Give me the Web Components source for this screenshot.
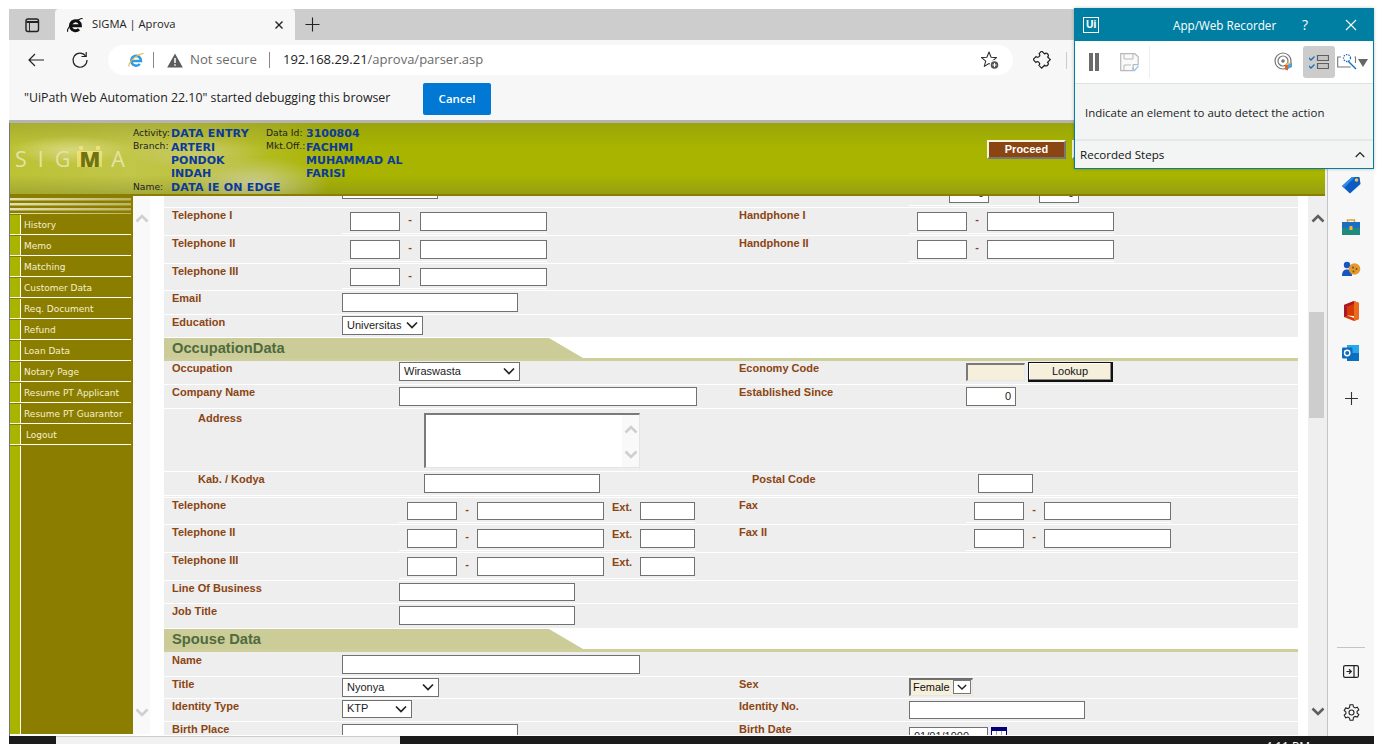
<!DOCTYPE html>
<html>
<head>
<meta charset="utf-8">
<title>SIGMA | Aprova</title>
<style>
  html, body { margin: 0; height: 744px; overflow: hidden; background: #fff; }
  app-shell { font-family: "Liberation Sans", Arial, sans-serif; }
</style>
</head>
<body>
<app-shell>
  <browser-chrome></browser-chrome>
  <div slot="page" style="display:contents">
    <sigma-header></sigma-header>
    <sigma-body>
      <sg-menu slot="menu">
        <sg-menu-item>History</sg-menu-item>
        <sg-menu-item>Memo</sg-menu-item>
        <sg-menu-item>Matching</sg-menu-item>
        <sg-menu-item>Customer Data</sg-menu-item>
        <sg-menu-item>Req. Document</sg-menu-item>
        <sg-menu-item>Refund</sg-menu-item>
        <sg-menu-item>Loan Data</sg-menu-item>
        <sg-menu-item>Notary Page</sg-menu-item>
        <sg-menu-item>Resume PT Applicant</sg-menu-item>
        <sg-menu-item>Resume PT Guarantor</sg-menu-item>
        <sg-menu-item indent>Logout</sg-menu-item>
        <sg-menu-item fill></sg-menu-item>
      </sg-menu>

      <sg-row h="12">
        <sg-field lw="170" ct="-16"><sg-input w="96"></sg-input></sg-field>
        <sg-field lw="170" ct="-12" under>
          <sg-input w="40" v="0" style="margin-left:32px"></sg-input>
          <sg-input w="40" v="0" style="margin-left:50px"></sg-input>
        </sg-field>
      </sg-row>
      <sg-row h="28">
        <sg-field label="Telephone I" lw="170" ct="4" under><sg-input w="50"></sg-input><sg-dash></sg-dash><sg-input w="127"></sg-input></sg-field>
        <sg-field label="Handphone I" lw="170" ct="4" under><sg-input w="50"></sg-input><sg-dash></sg-dash><sg-input w="127"></sg-input></sg-field>
      </sg-row>
      <sg-row h="28">
        <sg-field label="Telephone II" lw="170" ct="4" under><sg-input w="50"></sg-input><sg-dash></sg-dash><sg-input w="127"></sg-input></sg-field>
        <sg-field label="Handphone II" lw="170" ct="4" under><sg-input w="50"></sg-input><sg-dash></sg-dash><sg-input w="127"></sg-input></sg-field>
      </sg-row>
      <sg-row h="27">
        <sg-field label="Telephone III" lw="170" ct="4" under><sg-input w="50" h="18"></sg-input><sg-dash></sg-dash><sg-input w="127" h="18"></sg-input></sg-field>
        <sg-field></sg-field>
      </sg-row>
      <sg-row h="24">
        <sg-field label="Email" lw="170" ct="2"><sg-input w="176"></sg-input></sg-field>
        <sg-field></sg-field>
      </sg-row>
      <sg-row h="22" flat>
        <sg-field label="Education" lw="170" ct="1"><sg-select w="81" v="Universitas"></sg-select></sg-field>
        <sg-field></sg-field>
      </sg-row>

      <sg-section>OccupationData</sg-section>
      <sg-row h="24">
        <sg-field label="Occupation" lw="227" ct="1"><sg-select w="121" v="Wiraswasta"></sg-select></sg-field>
        <sg-field label="Economy Code" lw="227" ct="2"><sg-input w="59" h="18" kind="inset"></sg-input><sg-button>Lookup</sg-button></sg-field>
      </sg-row>
      <sg-row h="24">
        <sg-field label="Company Name" lw="227" ct="2"><sg-input w="298"></sg-input></sg-field>
        <sg-field label="Established Since" lw="227" ct="2"><sg-input w="50" v="0"></sg-input></sg-field>
      </sg-row>
      <sg-row h="63">
        <sg-field label="Address" lw="252" indent="26" lt="2" ct="4"><sg-textarea></sg-textarea></sg-field>
        <sg-field></sg-field>
      </sg-row>
      <sg-row h="26" double>
        <sg-field label="Kab. / Kodya" lw="252" indent="26" ct="2"><sg-input w="176"></sg-input></sg-field>
        <sg-field label="Postal Code" lw="239" indent="13" ct="2"><sg-input w="55"></sg-input></sg-field>
      </sg-row>
      <sg-row h="27">
        <sg-field label="Telephone" lw="227" ct="4" under><sg-input w="50" h="18"></sg-input><sg-dash></sg-dash><sg-input w="127" h="18"></sg-input><sg-ext></sg-ext><sg-input w="55" h="18"></sg-input></sg-field>
        <sg-field label="Fax" lw="227" ct="4" under><sg-input w="50" h="18"></sg-input><sg-dash></sg-dash><sg-input w="127" h="18"></sg-input></sg-field>
      </sg-row>
      <sg-row h="28">
        <sg-field label="Telephone II" lw="227" ct="4" under><sg-input w="50"></sg-input><sg-dash></sg-dash><sg-input w="127"></sg-input><sg-ext></sg-ext><sg-input w="55"></sg-input></sg-field>
        <sg-field label="Fax II" lw="227" ct="4" under><sg-input w="50"></sg-input><sg-dash></sg-dash><sg-input w="127"></sg-input></sg-field>
      </sg-row>
      <sg-row h="28">
        <sg-field label="Telephone III" lw="227" ct="4" under><sg-input w="50"></sg-input><sg-dash></sg-dash><sg-input w="127"></sg-input><sg-ext></sg-ext><sg-input w="55"></sg-input></sg-field>
        <sg-field></sg-field>
      </sg-row>
      <sg-row h="23">
        <sg-field label="Line Of Business" lw="227" ct="2"><sg-input w="176" h="18"></sg-input></sg-field>
        <sg-field></sg-field>
      </sg-row>
      <sg-row h="24" flat>
        <sg-field label="Job Title" lw="227" ct="2"><sg-input w="176"></sg-input></sg-field>
        <sg-field></sg-field>
      </sg-row>

      <sg-section>Spouse Data</sg-section>
      <sg-row h="25">
        <sg-field label="Name" lw="170" lt="1" ct="3"><sg-input w="298"></sg-input></sg-field>
        <sg-field></sg-field>
      </sg-row>
      <sg-row h="22">
        <sg-field label="Title" lw="170" ct="1"><sg-select w="97" v="Nyonya"></sg-select></sg-field>
        <sg-field label="Sex" lw="170" ct="1"><sg-select w="64" h="18" v="Female" kind="inset"></sg-select></sg-field>
      </sg-row>
      <sg-row h="23">
        <sg-field label="Identity Type" lw="170" ct="1"><sg-select w="70" h="18" v="KTP"></sg-select></sg-field>
        <sg-field label="Identity No." lw="170" ct="2"><sg-input w="176" h="18"></sg-input></sg-field>
      </sg-row>
      <sg-row h="13" flat>
        <sg-field label="Birth Place" lw="170" ct="2"><sg-input w="176"></sg-input></sg-field>
        <sg-field label="Birth Date" lw="170" ct="5"><sg-input w="79" v="01/01/1900" align="left"></sg-input><sg-calendar></sg-calendar></sg-field>
      </sg-row>
    </sigma-body>
  </div>
  <edge-sidebar slot="side"></edge-sidebar>
  <recorder-panel slot="over"></recorder-panel>
  <task-bar slot="task"></task-bar>
</app-shell>

<script>
const chevron = (color, up) => `<svg width="14" height="9" viewBox="0 0 14 9" style="display:block"><path d="${up ? 'M1.5 7.5 7 2l5.5 5.5' : 'M1.5 1.5 7 7l5.5-5.5'}" fill="none" stroke="${color}" stroke-width="2.6"/></svg>`;

class AppShell extends HTMLElement {
    constructor() {
        super();
        this.attachShadow({ mode: 'open' });
        this.shadowRoot.innerHTML = `
      <style>
        :host { display: block; position: relative; width: 1382px; height: 744px; overflow: hidden; background: #fff; }
        .frame { display: flex; flex-direction: column; height: 736px; margin: 0 8px 0 9px; padding-top: 9px; box-sizing: border-box; }
        .row { flex: 1; min-height: 0; display: flex; }
        .main { flex: none; width: 1318px; display: flex; flex-direction: column; border-left: 1px solid #777; box-sizing: border-box; background: #f0f0f0; }
      </style>
      <div class="frame">
        <slot></slot>
        <div class="row">
          <div class="main"><slot name="page"></slot></div>
          <slot name="side"></slot>
        </div>
      </div>
      <slot name="task"></slot>
      <slot name="over"></slot>
    `;
    }
}

class BrowserChrome extends HTMLElement {
    constructor() {
        super();
        this.attachShadow({ mode: 'open' });
        this.shadowRoot.innerHTML = `
      <style>
        :host { display: block; font-family: "Open Sans", "Noto Sans", sans-serif; color: #222; }
        .tabs { height: 31px; background: #cdcdcd; display: flex; align-items: flex-end; }
        .tabbtn { width: 46px; height: 31px; display: flex; align-items: center; justify-content: center; }
        .tab { width: 240px; height: 31px; background: #f7f7f7; border-radius: 4px 4px 0 0; display: flex; align-items: center; box-sizing: border-box; padding-left: 12px; }
        .tab .title { margin: -2px 0 0 9px; font-size: 11.2px; line-height: 16px; flex: 1; white-space: nowrap; }
        .tab .x { margin-right: 11px; display: block; }
        .plus { margin-left: 10px; align-self: center; display: block; }
        .tools { height: 40px; background: #f7f7f7; display: flex; align-items: center; }
        .tools > svg { display: block; flex: none; }
        .pill { margin-left: 19px; width: 905px; height: 30px; background: #fff; border-radius: 15px; display: flex; align-items: center; box-sizing: border-box; padding-left: 20px; flex: none; }
        .sep { width: 1px; height: 16px; background: #888; flex: none; }
        .ns { font-size: 13.2px; line-height: 18px; margin-top: -2px; color: #6b6b6b; margin-left: 7px; width: 79px; white-space: nowrap; }
        .url { font-size: 13px; line-height: 18px; margin-top: -2px; color: #6a6a6a; margin-left: 13px; white-space: nowrap; }
        .url b { font-weight: 400; color: #222; }
        .star { margin-left: auto; margin-right: 13px; display: block; }
        .info { height: 37px; background: #f7f7f7; display: flex; align-items: flex-start; padding: 3px 0 0 15px; border-bottom: 3px solid #b4b4b4; box-sizing: content-box; }
        .info span { font-size: 12.36px; line-height: 30px; width: 399px; white-space: nowrap; }
        .info button { width: 68px; height: 32px; background: #0078d4; color: #fff; border: 0; border-radius: 2px; font: 600 11.5px "Open Sans", sans-serif; padding: 0 0 2px; }
      </style>
      <div class="tabs">
        <div class="tabbtn">
          <svg width="16" height="16" viewBox="0 0 16 16"><rect x="2" y="2" width="12.5" height="12.5" rx="2" fill="none" stroke="#222" stroke-width="1.4"/><path d="M2.5 5h11.5" stroke="#222" stroke-width="2"/><path d="M5.5 5v9" stroke="#222" stroke-width=".9"/></svg>
        </div>
        <div class="tab">
          <svg width="16" height="16" viewBox="0 0 16 16"><path d="M3.6 8.8h9.8A5 5 0 1 0 12 12.2" fill="none" stroke="#111" stroke-width="3"/><path d="M.8 14.8C-.5 12 4 7 8 4.5s7-3.6 7.5-2.5" fill="none" stroke="#111" stroke-width="1.1"/></svg>
          <span class="title">SIGMA | Aprova</span>
          <svg class="x" width="10" height="10" viewBox="0 0 10 10"><path d="M1.5 1.5l7 7M8.5 1.5l-7 7" stroke="#222" stroke-width="1.4"/></svg>
        </div>
        <svg class="plus" width="15" height="15" viewBox="0 0 15 15"><path d="M7.5 .5v14M.5 7.5h14" stroke="#222" stroke-width="1.1"/></svg>
      </div>
      <div class="tools">
        <svg width="18" height="14" viewBox="0 0 18 14" style="margin-left:18px"><path d="M17 7H2M8 1 2 7l6 6" fill="none" stroke="#222" stroke-width="1.2"/></svg>
        <svg width="18" height="18" viewBox="0 0 18 18" style="margin-left:26px"><path d="M14.6 5A7 7 0 1 0 16 9" fill="none" stroke="#222" stroke-width="1.2"/><path d="M15.2 1v4.5h-4.7" fill="none" stroke="#222" stroke-width="1.2"/></svg>
        <div class="pill">
          <svg width="16" height="16" viewBox="0 0 16 16" style="flex:none"><path d="M3.6 9h9.4A4.9 4.9 0 1 0 11.8 12" fill="none" stroke="#2e9be6" stroke-width="2.6"/><path d="M1 14.5C0 12 4 7 8 4.5s7-3.6 7.5-2.5" fill="none" stroke="#f2b53a" stroke-width="1.1"/></svg>
          <div class="sep" style="margin-left:9px"></div>
          <svg width="16" height="15" viewBox="0 0 16 15" style="margin-left:13px;flex:none"><path d="M8 .5 15.8 14.5H.2z" fill="#5c5c5c"/><path d="M8 5v5M8 11.2v1.6" stroke="#fff" stroke-width="1.5"/></svg>
          <span class="ns">Not secure</span>
          <div class="sep"></div>
          <span class="url"><b>192.168.29.21</b>/aprova/parser.asp</span>
          <svg class="star" width="20" height="20" viewBox="0 0 20 20"><path d="M9 2 11.1 7.2 16.5 7.6 12.3 11.1 13.7 16.4 9 13.5 4.3 16.4 5.7 11.1 1.5 7.6 6.9 7.2z" fill="none" stroke="#333" stroke-width="1.1" stroke-linejoin="round"/><circle cx="14.5" cy="15" r="5" fill="#fff"/><circle cx="14.5" cy="15" r="3.8" fill="#555"/><path d="M14.5 13v4M12.5 15h4" stroke="#fff" stroke-width="1"/></svg>
        </div>
        <svg width="18" height="18" viewBox="0 0 18 18" style="margin-left:20px"><path d="M6.5 2.5a2.3 2.3 0 0 1 4.6 0H15v4a2.3 2.3 0 0 1 0 4.6V15.5h-4.2a2.3 2.3 0 0 0-4.6 0H2v-4.4a2.3 2.3 0 0 0 0-4.6V2.5z" fill="none" stroke="#222" stroke-width="1.3" transform="rotate(45 9 9) scale(.93) translate(.6 .6)"/></svg>
        <div class="sep" style="height:17px;background:#ccc;margin-left:15px"></div>
      </div>
      <div class="info">
        <span>"UiPath Web Automation 22.10" started debugging this browser</span>
        <button type="button">Cancel</button>
      </div>
    `;
    }
}

class SigmaHeader extends HTMLElement {
    constructor() {
        super();
        this.attachShadow({ mode: 'open' });
        this.shadowRoot.innerHTML = `
      <style>
        :host {
          display: flex; flex: none; height: 73px; margin-right: 2px; box-sizing: border-box;
          border-bottom: 2px solid #8b7d00;
          background:
            radial-gradient(ellipse 75px 26px at 245px 60px, rgba(215,215,205,.62), rgba(215,215,205,0)),
            radial-gradient(ellipse 70px 16px at 190px 30px, rgba(215,215,170,.4), rgba(215,215,170,0)),
            radial-gradient(ellipse 60px 14px at 60px 27px, rgba(225,225,150,.7), rgba(225,225,150,0)),
            linear-gradient(180deg, rgba(130,135,30,.35) 0, rgba(130,135,30,0) 24px, rgba(130,135,30,0) 52px, rgba(120,125,40,.4) 72px),
            linear-gradient(90deg, #bcc234 0, #c2c649 120px, #bcc13c 200px, #a8b400 320px);
        }
        .logo { width: 123px; flex: none; box-sizing: border-box; padding: 24px 0 0 5px; font: 400 21.5px/24px "Open Sans", sans-serif; letter-spacing: 11px; color: #e3e3a6; white-space: nowrap; overflow: hidden; }
        .logo .g { letter-spacing: 7px; }
        .logo b { position: relative; color: #6f7210; font-weight: 800; background: linear-gradient(#efe27a, #dfdb62); letter-spacing: 0; margin-right: 9px; padding: 0 2px; line-height: 16px; display: inline-block; }
        .logo b::before { content: ""; position: absolute; left: 0; right: 0; top: -5px; height: 4px; background: radial-gradient(circle at 4px 2px, #efe27a 2px, transparent 2.5px), radial-gradient(circle at calc(100% - 4px) 2px, #efe27a 2px, transparent 2.5px); }
        .logo .a { letter-spacing: 0; }
        .info { display: grid; grid-template-columns: 38px 95px 40px 105px; grid-template-rows: 14px 13px 13px 13px 14px; padding-top: 4px; position: relative; }
        .k { font: 400 9.2px/12px "DejaVu Sans", sans-serif; color: #222; white-space: nowrap; }
        .k.b { margin-top: -1px; }
        .v { font: 700 11px/13px "DejaVu Sans", sans-serif; color: #0b3a9e; }
        .wide { white-space: nowrap; letter-spacing: .2px; }
        .actions { margin: 17px 0 0 auto; display: flex; gap: 6px; padding-right: 193px; }
        .proceed, .next { height: 19px; box-sizing: border-box; border: 2px solid; border-color: #f5f5e6 #777 #777 #f5f5e6; }
        .proceed { width: 79px; background: #8b4513; color: #fff; font: 700 11px/15px "Liberation Sans", sans-serif; text-align: center; }
        .next { width: 60px; background: #f5efdc; }
      </style>
      <div class="logo">SI<span class="g">G</span><b>M</b><span class="a">A</span></div>
      <div class="info">
        <div class="k">Activity:</div><div class="v wide">DATA ENTRY</div>
        <div class="k">Data Id:</div><div class="v">3100804</div>
        <div class="k b">Branch:</div><div class="v" style="grid-row:span 3">ARTERI<br>PONDOK<br>INDAH</div>
        <div class="k b">Mkt.Off.:</div><div class="v" style="grid-row:span 3">FACHMI<br>MUHAMMAD AL<br>FARISI</div>
        <div class="k" style="grid-row:5;grid-column:1;align-self:end;margin-bottom:1px">Name:</div>
        <div class="v wide" style="grid-row:5;grid-column:2;align-self:end">DATA IE ON EDGE</div>
      </div>
      <div class="actions"><div class="proceed">Proceed</div><div class="next"></div></div>
    `;
    }
}

class SigmaBody extends HTMLElement {
    constructor() {
        super();
        this.attachShadow({ mode: 'open' });
        this.shadowRoot.innerHTML = `
      <style>
        :host { display: flex; flex: 1; min-height: 0; background: #fff; }
        .inner { width: 17px; flex: none; background: #f9f9f9; display: flex; flex-direction: column; justify-content: space-between; align-items: center; padding: 18px 0 17px; box-sizing: border-box; height: 538px; }
        .form { width: 1134px; margin-left: 14px; flex: none; height: 539px; overflow: hidden; background: #fff; }
        .bar { width: 19px; margin-left: 10px; flex: none; background: #efefef; display: flex; flex-direction: column; align-items: center; box-sizing: border-box; padding: 18px 0 0; position: relative; }
        .thumb { width: 15px; height: 106px; background: #cdcdcd; margin: 89px 2px 0 0; }
        .down { margin-top: auto; margin-bottom: 20px; }
      </style>
      <slot name="menu"></slot>
      <div class="inner">${chevron('#cfcfcf', true)}${chevron('#cfcfcf', false)}</div>
      <div class="form"><slot></slot></div>
      <div class="bar">${chevron('#5f5f5f', true)}<div class="thumb"></div><div class="down">${chevron('#5f5f5f', false)}</div></div>
    `;
    }
}

class SgMenu extends HTMLElement {
    constructor() {
        super();
        this.attachShadow({ mode: 'open' });
        this.shadowRoot.innerHTML = `
      <style>
        :host { display: flex; flex-direction: column; width: 123px; flex: none; height: 538px; background: #8b7d00; }
        .strips { height: 18px; flex: none; margin-right: 2px; background: linear-gradient(90deg, rgba(139,125,0,0), rgba(139,125,0,.45)), repeating-linear-gradient(180deg, #8b7d00 0 2px, #e4e2b4 2px 4px, #b5ae50 4px 5px); }
        .list { flex: 1; display: flex; flex-direction: column; margin-right: 2px; }
      </style>
      <div class="strips"></div>
      <div class="list"><slot></slot></div>
    `;
    }
}

class SgMenuItem extends HTMLElement {
    constructor() {
        super();
        this.attachShadow({ mode: 'open' });
        this.shadowRoot.innerHTML = `
      <style>
        :host { display: flex; height: 21px; flex: none; box-sizing: border-box; border-bottom: 1px solid #fff; font: 400 9px/20px "DejaVu Sans", sans-serif; color: #f5f1d0; padding-top: 1px; white-space: nowrap; }
        :host([fill]) { flex: 1; border-bottom: 0; }
        :host([indent]) .t { padding-left: 5px; }
        .s { width: 10px; background: #a8b400; border-right: 1px solid #fff; flex: none; }
        .t { padding-left: 3px; }
      </style>
      <div class="s"></div><div class="t"><slot></slot></div>
    `;
    }
}

class SgRow extends HTMLElement {
    constructor() {
        super();
        this.attachShadow({ mode: 'open' });
        this.shadowRoot.innerHTML = `
      <style>
        :host { display: grid; grid-template-columns: 567px 1fr; box-sizing: border-box; overflow: hidden; background: #eee; border-bottom: 1px solid #fff; }
        :host([flat]) { border-bottom: 0; }
        :host([double]) { border-bottom: 3px double #fff; }
      </style>
      <slot></slot>
    `;
    }
    connectedCallback() {
        this.style.height = this.getAttribute('h') + 'px';
    }
}

class SgField extends HTMLElement {
    constructor() {
        super();
        this.attachShadow({ mode: 'open' });
    }
    connectedCallback() {
        const label = this.getAttribute('label') || '';
        const lw = this.getAttribute('lw') || 170;
        const lt = this.getAttribute('lt') || 0;
        const ct = this.getAttribute('ct') || 0;
        const indent = this.getAttribute('indent') || 0;
        const under = this.hasAttribute('under');
        this.shadowRoot.innerHTML = `
      <style>
        :host { display: flex; padding-left: 8px; min-width: 0; align-items: flex-start; }
        .label { width: ${lw}px; flex: none; box-sizing: border-box; padding: ${lt}px 0 0 ${indent}px; font: 700 11px/14px "Liberation Sans", sans-serif; color: #8b4513; white-space: nowrap; }
        .ctl { display: flex; align-items: flex-start; margin-top: ${ct}px; }
        .ctl.under { padding: 0 0 2px 8px; border-bottom: 1px solid #fff; }
      </style>
      <div class="label">${label}</div>
      <div class="ctl ${under ? 'under' : ''}"><slot></slot></div>
    `;
    }
}

class SgInput extends HTMLElement {
    constructor() {
        super();
        this.attachShadow({ mode: 'open' });
    }
    connectedCallback() {
        const v = this.getAttribute('v') || '';
        const inset = this.getAttribute('kind') === 'inset';
        this.shadowRoot.innerHTML = `
      <style>
        :host { display: block; flex: none; width: ${this.getAttribute('w')}px; height: ${this.getAttribute('h') || 19}px; }
        .box { box-sizing: border-box; width: 100%; height: 100%; background: #fff; border: 1px solid #717171; font: 400 11px/17px "Liberation Sans", sans-serif; color: #222; text-align: ${this.getAttribute('align') || 'right'}; padding: 0 4px; white-space: nowrap; }
        .box.inset { background: #f5efdc; border-width: 2px 1px 1px 2px; border-color: #7a7a7a #e8e8e8 #e8e8e8 #7a7a7a; }
      </style>
      <div class="box ${inset ? 'inset' : ''}">${v}</div>
    `;
    }
}

class SgSelect extends HTMLElement {
    constructor() {
        super();
        this.attachShadow({ mode: 'open' });
    }
    connectedCallback() {
        const inset = this.getAttribute('kind') === 'inset';
        const arrow = '<svg width="12" height="8" viewBox="0 0 12 8"><path d="M1 1.5 6 6.5 11 1.5" fill="none" stroke="#222" stroke-width="1.7"/></svg>';
        this.shadowRoot.innerHTML = `
      <style>
        :host { display: block; flex: none; width: ${this.getAttribute('w')}px; height: ${this.getAttribute('h') || 19}px; }
        .sel { box-sizing: border-box; width: 100%; height: 100%; background: #fff; border: 1px solid #717171; display: flex; align-items: center; justify-content: space-between; padding: 0 4px; font: 400 11px/16px "Liberation Sans", sans-serif; color: #222; }
        .sel span { margin-top: -2px; }
        .sel.inset { background: #f5efdc; border-width: 2px 1px 1px 2px; border-color: #6f6f6f #e6e6e6 #e6e6e6 #6f6f6f; padding: 0 1px 0 2px; color: #111; }
        .sel.inset i { width: 18px; height: 14px; box-sizing: border-box; background: #fff; border: 1px solid #777; display: flex; align-items: center; justify-content: center; }
        .sel.inset i svg { width: 10px; }
        i { display: flex; margin-top: -1px; }
      </style>
      <div class="sel ${inset ? 'inset' : ''}"><span>${this.getAttribute('v')}</span><i>${arrow}</i></div>
    `;
    }
}

class SgDash extends HTMLElement {
    constructor() {
        super();
        this.attachShadow({ mode: 'open' }).innerHTML = `
      <style>:host { display: block; width: 20px; flex: none; text-align: center; font: 700 11px/14px "Liberation Sans", sans-serif; color: #8b4513; }</style>-`;
    }
}

class SgExt extends HTMLElement {
    constructor() {
        super();
        this.attachShadow({ mode: 'open' }).innerHTML = `
      <style>:host { display: block; width: 36px; flex: none; box-sizing: border-box; padding-left: 8px; margin-top: -2px; font: 700 11px/14px "Liberation Sans", sans-serif; color: #8b4513; }</style>Ext.`;
    }
}

class SgButton extends HTMLElement {
    constructor() {
        super();
        this.attachShadow({ mode: 'open' }).innerHTML = `
      <style>
        :host { display: block; flex: none; box-sizing: border-box; width: 85px; height: 20px; margin: -1px 0 0 3px; background: #f5efdc; border: 1px solid #111; border-width: 1px 2px 2px 1px; box-shadow: inset -1px -1px 0 #888, inset 1px 1px 0 #fff; text-align: center; font: 400 11px/17px "Liberation Sans", sans-serif; color: #111; }
      </style><slot></slot>`;
    }
}

class SgTextarea extends HTMLElement {
    constructor() {
        super();
        this.attachShadow({ mode: 'open' }).innerHTML = `
      <style>
        :host { display: block; flex: none; box-sizing: border-box; width: 216px; height: 55px; background: #fff; border: 2px solid #7a7a7a; border-right: 1px solid #e4e4e4; border-bottom: 1px solid #e4e4e4; }
        .wrap { height: 100%; display: flex; justify-content: flex-end; }
        .sb { width: 17px; background: #f9f9f9; display: flex; flex-direction: column; align-items: center; justify-content: space-between; padding: 10px 0 8px; box-sizing: border-box; }
      </style>
      <div class="wrap"><div class="sb">${chevron('#cfcfcf', true)}${chevron('#cfcfcf', false)}</div></div>`;
    }
}

class SgCalendar extends HTMLElement {
    constructor() {
        super();
        this.attachShadow({ mode: 'open' }).innerHTML = `
      <style>:host { display: block; flex: none; margin-left: 3px; margin-top: 0; }</style>
      <svg width="16" height="16" viewBox="0 0 16 16" style="display:block"><rect x=".5" y=".5" width="15" height="15" fill="#fff" stroke="#00007a"/><rect width="16" height="4" fill="#00007a"/><path d="M5.5 4v11M10.5 4v11M1 8.5h14M1 12.5h14" stroke="#aaa"/></svg>`;
    }
}

class SgSection extends HTMLElement {
    constructor() {
        super();
        this.attachShadow({ mode: 'open' });
        this.shadowRoot.innerHTML = `
      <style>
        :host { display: block; height: 24px; box-sizing: border-box; padding-top: 1px; background: #fff; }
        .wrap { height: 23px; position: relative; border-bottom: 3px solid #cfcf9b; box-sizing: border-box; }
        .tab { height: 20px; width: 419px; background: #cccc99; clip-path: polygon(0 0, 385px 0, 419px 100%, 0 100%); box-sizing: border-box; padding-left: 8px; font: 700 14.7px/21px "Liberation Sans", sans-serif; color: #4f6b3d; white-space: nowrap; }
      </style>
      <div class="wrap"><div class="tab"><slot></slot></div></div>
    `;
    }
}

class EdgeSidebar extends HTMLElement {
    constructor() {
        super();
        this.attachShadow({ mode: 'open' });
        this.shadowRoot.innerHTML = `
      <style>
        :host { display: flex; flex-direction: column; align-items: center; width: 47px; flex: none; box-sizing: border-box; border-left: 1px solid #c4c4c4; background: #f7f7f7; padding: 41px 0 3px; }
        .i { height: 42px; flex: none; display: flex; align-items: center; justify-content: center; }
        svg { display: block; }
        .sp { margin-top: auto; width: 28px; height: 1px; background: #c4c4c4; margin-bottom: 2px; flex: none; }
      </style>
      <div class="i"><svg width="20" height="20" viewBox="0 0 20 20"><path d="M1 11 11 2h7.5l1 7L9 18.500z" fill="#0a5bc4"/><path d="M1 11 11 2l3 0L3 13z" fill="#2f8be6"/><circle cx="15.5" cy="5" r="1.8" fill="#f2c14e"/></svg></div>
      <div class="i"><svg width="20" height="18" viewBox="0 0 20 18"><path d="M6.5 5V2h7v3" fill="none" stroke="#e0a030" stroke-width="1.5"/><rect x="1" y="4" width="18" height="6" fill="#1b6fc2"/><rect x="1" y="10" width="18" height="7" fill="#1f8a7d"/><rect x="8.5" y="8" width="3" height="4" fill="#f2b53a"/></svg></div>
      <div class="i"><svg width="20" height="18" viewBox="0 0 20 18"><circle cx="6" cy="5" r="3.2" fill="#1656c4"/><path d="M1 16c0-5 2-6.5 5-6.5S11 11 11 16z" fill="#1656c4"/><circle cx="13.5" cy="9" r="5.8" fill="#e29a2e"/><circle cx="12" cy="7.5" r="1" fill="#7d4d10"/><circle cx="15.5" cy="9" r="1" fill="#7d4d10"/><circle cx="12.5" cy="11.500" r="1" fill="#7d4d10"/></svg></div>
      <div class="i"><svg width="17" height="20" viewBox="0 0 17 20"><path d="M1 4 11 0l5 2v16l-5 2-10-4z" fill="#d83b01"/><path d="M1 4 11 0v3L4 5.5v9L1 16z" fill="#a6192e"/><path d="M11 3v14l-7-2.5 7 .5z" fill="#fff" opacity=".95"/><path d="M11 0l5 2v16l-5 2z" fill="#eb6c1f"/></svg></div>
      <div class="i"><svg width="18" height="18" viewBox="0 0 18 18"><rect x="5" y="1" width="12" height="16" fill="#28a8ea"/><path d="M5 9h12v8H5z" fill="#0a6fc0"/><rect x="0" y="3.5" width="10.5" height="11" rx="1" fill="#0f6cbd"/><circle cx="5.2" cy="9" r="2.7" fill="none" stroke="#fff" stroke-width="1.4"/></svg></div>
      <div class="i" style="margin-top:3px"><svg width="13" height="13" viewBox="0 0 13 13"><path d="M6.5 0v13M0 6.5h13" stroke="#333" stroke-width="1.1"/></svg></div>
      <div class="sp"></div>
      <div class="i"><svg width="16" height="13" viewBox="0 0 16 13"><rect x=".6" y=".6" width="14.8" height="11.8" rx="1.5" fill="none" stroke="#222" stroke-width="1.2"/><path d="M11 1v11" stroke="#222" stroke-width="1.2"/><path d="M3.5 6.5H8M6 4.3 8.3 6.5 6 8.7" fill="none" stroke="#222" stroke-width="1.2"/></svg></div>
      <div class="i" style="margin-top:-1px"><svg width="17" height="17" viewBox="0 0 17 17"><path d="M7 .8h3l.5 2.200 1.600.9 2.200-.7 1.500 2.600-1.700 1.500v1.700l1.700 1.500-1.500 2.600-2.200-.7-1.600.9L10 16.200H7l-.5-2.200-1.600-.9-2.200.7L1.200 11.200 2.900 9.700V8L1.200 6.500l1.500-2.600 2.200.7 1.600-.9z" fill="none" stroke="#222" stroke-width="1.1"/><circle cx="8.5" cy="8.5" r="2.5" fill="none" stroke="#222" stroke-width="1.1"/></svg></div>
    `;
    }
}

class RecorderPanel extends HTMLElement {
    constructor() {
        super();
        this.attachShadow({ mode: 'open' });
        this.shadowRoot.innerHTML = `
      <style>
        :host { position: absolute; left: 1074px; top: 8px; width: 300px; height: 161px; box-sizing: border-box; border: 1px solid #007fa3; border-top: 0; background: #f3f5f5; display: flex; flex-direction: column; font-family: "Open Sans", "Noto Sans", sans-serif; color: #222; box-shadow: 0 0 3px rgba(0,0,0,.25); }
        svg { display: block; flex: none; }
        .head { height: 33px; margin: 0 -1px; background: #007fa3; display: flex; align-items: center; color: #fff; flex: none; }
        .ui { width: 16px; height: 16px; box-sizing: border-box; border: 1.5px solid #fff; margin-left: 9px; font: 700 10.5px/13px "Open Sans", sans-serif; text-align: center; letter-spacing: -.3px; }
        .title { margin-left: 74px; width: 118px; font-size: 11.7px; white-space: nowrap; }
        .q { font-size: 14px; margin-left: 11px; width: 10px; }
        .x { margin-left: 33px; }
        .tb { height: 42px; background: #fff; border-bottom: 1px solid #e2e2e2; display: flex; align-items: center; flex: none; }
        .sep { width: 1px; height: 32px; background: #eee; margin-left: 10px; }
        .on { width: 32px; height: 32px; background: #ccc; border-radius: 3px; display: flex; align-items: center; justify-content: center; margin-left: 9px; }
        .msg { height: 57px; box-sizing: border-box; padding: 21px 0 0 10px; font-size: 11.45px; line-height: 16px; white-space: nowrap; border-bottom: 2px solid #e6e8e8; flex: none; }
        .steps { flex: 1; display: flex; align-items: center; justify-content: space-between; padding: 0 8px 0 5px; font-size: 11.6px; font-weight: 500; color: #111; }
      </style>
      <div class="head">
        <div class="ui">Ui</div>
        <div class="title">App/Web Recorder</div>
        <div class="q">?</div>
        <svg class="x" width="12" height="12" viewBox="0 0 12 12"><path d="M1 1l10 10M11 1 1 11" stroke="#fff" stroke-width="1.1"/></svg>
      </div>
      <div class="tb">
        <svg width="11" height="18" viewBox="0 0 11 18" style="margin-left:14px"><path d="M0 0h4v18H0zM6 0h4v18H6z" fill="#6a6a6a"/></svg>
        <svg width="19" height="19" viewBox="0 0 19 19" style="margin-left:20px"><path d="M.7.7h14l3.5 3v8h-5v6H.7z" fill="#fafafa" stroke="#b9b9b9" stroke-width="1.2"/><path d="M4 1v5h9V1M4 18v-6h7" fill="none" stroke="#b9b9b9"/><path d="M12 15l2.5 2.5 4-4.500" fill="none" stroke="#9cc4ea" stroke-width="1.3"/></svg>
        <div class="sep"></div>
        <svg width="20" height="20" viewBox="0 0 20 20" style="margin-left:124px"><circle cx="9" cy="9" r="8" fill="none" stroke="#777" stroke-width="1.2"/><circle cx="9" cy="9" r="5" fill="none" stroke="#777" stroke-width="1.2"/><circle cx="9" cy="9" r="1.8" fill="#777"/><path d="M14 11.5l4-1.5v5l-4 2z" fill="#4aa3e0"/><path d="M14 11.5l-3 2v4l3 1z" fill="#e2622b"/><path d="M11 13l3-2.5 4 0-4 2.5z" fill="#f2c14e"/></svg>
        <div class="on"><svg width="20" height="16" viewBox="0 0 20 16"><path d="M8.5 1.5h11v5h-11zM8.5 9.5h11v5h-11z" fill="#c4c4c4" stroke="#5f5f5f" stroke-width="1.2"/><path d="M0 4l2 2 3.5-3.5M0 12l2 2 3.5-3.5" fill="none" stroke="#0f6fc6" stroke-width="1.3"/></svg></div>
        <svg width="32" height="16" viewBox="0 0 32 16" style="margin-left:2px"><path d="M4 3H.7v10h13M17.5 3h1v6" fill="none" stroke="#777" stroke-width="1.1"/><path d="M11 7l8 8" stroke="#1a70c4" stroke-width="1.4"/><circle cx="10" cy="4" r="3.5" fill="none" stroke="#1a70c4" stroke-width="1.3" stroke-dasharray="1.4 1.1"/><path d="M21 5h10l-5 8z" fill="#666"/></svg>
      </div>
      <div class="msg">Indicate an element to auto detect the action</div>
      <div class="steps"><span>Recorded Steps</span><svg width="10" height="7" viewBox="0 0 10 7"><path d="M.7 6 5 1.5 9.3 6" fill="none" stroke="#222" stroke-width="1.2"/></svg></div>
    `;
    }
}

class TaskBar extends HTMLElement {
    constructor() {
        super();
        this.attachShadow({ mode: 'open' });
        this.shadowRoot.innerHTML = `
      <style>
        :host { display: flex; height: 8px; margin: 0 8px 0 9px; background: #1b1b1b; overflow: hidden; box-sizing: border-box; }
        .thumb { margin-left: 47px; width: 344px; background: #f1f1f1; border-top: 1px solid #ccc; position: relative; }
        .clock { margin-left: auto; margin-right: 64px; font: 400 12px/14px "Open Sans", sans-serif; color: #fff; padding-top: 4px; white-space: nowrap; }
      </style>
      <div class="thumb"></div>
      <div class="clock">4:11 PM</div>
    `;
    }
}

customElements.define('app-shell', AppShell);
customElements.define('browser-chrome', BrowserChrome);
customElements.define('sigma-header', SigmaHeader);
customElements.define('sigma-body', SigmaBody);
customElements.define('sg-menu', SgMenu);
customElements.define('sg-menu-item', SgMenuItem);
customElements.define('sg-row', SgRow);
customElements.define('sg-field', SgField);
customElements.define('sg-input', SgInput);
customElements.define('sg-select', SgSelect);
customElements.define('sg-dash', SgDash);
customElements.define('sg-ext', SgExt);
customElements.define('sg-button', SgButton);
customElements.define('sg-textarea', SgTextarea);
customElements.define('sg-calendar', SgCalendar);
customElements.define('sg-section', SgSection);
customElements.define('edge-sidebar', EdgeSidebar);
customElements.define('recorder-panel', RecorderPanel);
customElements.define('task-bar', TaskBar);
</script>
</body>
</html>
